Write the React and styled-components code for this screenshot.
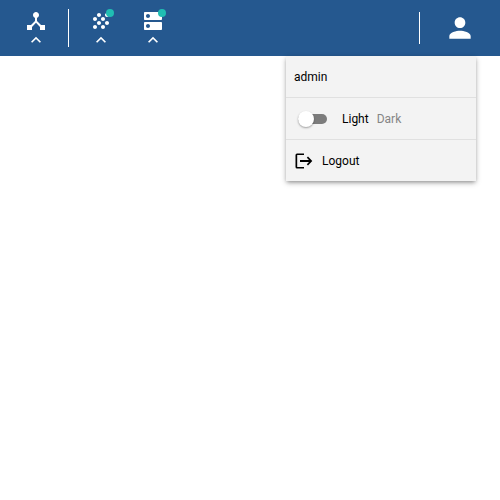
import React, { useState } from "react";
import styled, { createGlobalStyle } from "styled-components";

const GlobalStyle = createGlobalStyle`
  * {
    box-sizing: border-box;
  }
  body {
    margin: 0;
    background: #ffffff;
    color: #000000;
    font: 12px/16px Roboto, "Liberation Sans", sans-serif;
  }
`;

const Shell = styled.div`
  min-height: 100vh;
`;

const Header = styled.header`
  position: relative;
  display: flex;
  align-items: center;
  justify-content: space-between;
  height: 56px;
  padding: 0 24px 0 10px;
  background: #25588f;
`;

const Group = styled.nav`
  display: flex;
  align-items: center;
`;

const Divider = styled.span`
  width: 1px;
  height: ${({ $height }) => $height}px;
  margin: 0 6px;
  background: #ffffff;
`;

const NavButton = styled.button`
  position: relative;
  display: flex;
  flex-direction: column;
  align-items: center;
  width: 52px;
  padding: 3px 0 0;
  border: 0;
  background: none;
  color: #ffffff;
  cursor: pointer;
`;

const AccountButton = styled.button`
  display: flex;
  margin-left: 18px;
  padding: 0;
  border: 0;
  background: none;
  color: #ffffff;
  cursor: pointer;
`;

const Icon = styled.svg`
  display: block;
  width: ${({ $size }) => $size}px;
  height: ${({ $size }) => $size}px;
  fill: currentColor;
`;

const Chevron = styled(Icon)`
  margin-top: -3px;
`;

const Badge = styled.span`
  position: absolute;
  top: 3px;
  right: 13px;
  width: 8px;
  height: 8px;
  border-radius: 50%;
  background: #20beb3;
`;

const Menu = styled.div`
  position: absolute;
  top: 100%;
  right: 24px;
  width: 190px;
  background: #f3f3f3;
  box-shadow: 0 2px 4px -1px rgba(0, 0, 0, 0.35), 0 2px 6px rgba(0, 0, 0, 0.18);
`;

const MenuRow = styled.div`
  display: flex;
  align-items: center;
  min-height: 41px;
  padding: 0 8px;

  &:not(:first-child) {
    min-height: 42px;
    border-top: 1px solid #e0e0e0;
  }
`;

const SwitchLabel = styled.label`
  display: flex;
  align-items: center;
  padding-left: 4px;
  cursor: pointer;
`;

const Switch = styled.input`
  appearance: none;
  display: flex;
  align-items: center;
  width: 29px;
  height: 10px;
  margin: 0 15px 0 0;
  background: #7c7c7c;
  border-radius: 5px;
  cursor: pointer;

  &::before {
    content: "";
    flex: none;
    width: 16px;
    height: 16px;
    border-radius: 50%;
    background: #ffffff;
    box-shadow: 0 1px 2px rgba(0, 0, 0, 0.35);
  }
  &:checked::before {
    margin-left: 13px;
  }
`;

const Mode = styled.span`
  margin-right: 8px;
  color: ${({ $active }) => ($active ? "#000000" : "#858585")};
`;

const LogoutButton = styled.button`
  display: flex;
  align-items: center;
  gap: 8px;
  flex: 1;
  padding: 0;
  border: 0;
  background: none;
  color: inherit;
  font: inherit;
  cursor: pointer;
`;

const paths = {
  hub: "M17 16l-4-4V8.82C14.16 8.4 15 7.3 15 6c0-1.66-1.34-3-3-3S9 4.34 9 6c0 1.3.84 2.4 2 2.82V12l-4 4H3v5h5v-3.05l4-4.2 4 4.2V21h5v-5h-4z",
  grain:
    "M10 12c-1.1 0-2 .9-2 2s.9 2 2 2 2-.9 2-2-.9-2-2-2zM6 8c-1.1 0-2 .9-2 2s.9 2 2 2 2-.9 2-2-.9-2-2-2zm0 8c-1.1 0-2 .9-2 2s.9 2 2 2 2-.9 2-2-.9-2-2-2zm12-8c1.1 0 2-.9 2-2s-.9-2-2-2-2 .9-2 2 .9 2 2 2zm-4 8c-1.1 0-2 .9-2 2s.9 2 2 2 2-.9 2-2-.9-2-2-2zm4-4c-1.1 0-2 .9-2 2s.9 2 2 2 2-.9 2-2-.9-2-2-2zm-4-4c-1.1 0-2 .9-2 2s.9 2 2 2 2-.9 2-2-.9-2-2-2zm-4-4c-1.1 0-2 .9-2 2s.9 2 2 2 2-.9 2-2-.9-2-2-2z",
  servers:
    "M20 13H4c-.55 0-1 .45-1 1v6c0 .55.45 1 1 1h16c.55 0 1-.45 1-1v-6c0-.55-.45-1-1-1zM7 19c-1.1 0-2-.9-2-2s.9-2 2-2 2 .9 2 2-.9 2-2 2zM20 3H4c-.55 0-1 .45-1 1v6c0 .55.45 1 1 1h16c.55 0 1-.45 1-1V4c0-.55-.45-1-1-1zM7 9c-1.1 0-2-.9-2-2s.9-2 2-2 2 .9 2 2-.9 2-2 2z",
  up: "M12 8l-6 6 1.41 1.41L12 10.83l4.59 4.58L18 14z",
  person:
    "M12 12c2.21 0 4-1.79 4-4s-1.79-4-4-4-4 1.79-4 4 1.79 4 4 4zm0 2c-2.67 0-8 1.34-8 4v2h16v-2c0-2.66-5.33-4-8-4z",
};

function NavItem({ label, path, badge }) {
  return (
    <NavButton type="button" aria-label={label}>
      <Icon $size={24} viewBox="0 0 24 24" aria-hidden="true">
        <path d={path} />
      </Icon>
      <Chevron $size={20} viewBox="0 0 24 24" aria-hidden="true">
        <path d={paths.up} />
      </Chevron>
      {badge && <Badge />}
    </NavButton>
  );
}

export default function App() {
  const [dark, setDark] = useState(false);

  return (
    <Shell>
      <GlobalStyle />
      <Header>
        <Group aria-label="Main">
          <NavItem label="Topology" path={paths.hub} />
          <Divider $height={38} />
          <NavItem label="Clusters" path={paths.grain} badge />
          <NavItem label="Servers" path={paths.servers} badge />
        </Group>
        <Group aria-label="Account">
          <Divider $height={32} />
          <AccountButton type="button" aria-label="Account">
            <Icon $size={32} viewBox="0 0 24 24" aria-hidden="true">
              <path d={paths.person} />
            </Icon>
          </AccountButton>
        </Group>
        <Menu>
          <MenuRow>admin</MenuRow>
          <MenuRow>
            <SwitchLabel>
              <Switch
                type="checkbox"
                role="switch"
                checked={dark}
                onChange={(event) => setDark(event.target.checked)}
              />
              <Mode $active={!dark}>Light</Mode>
              <Mode $active={dark}>Dark</Mode>
            </SwitchLabel>
          </MenuRow>
          <MenuRow>
            <LogoutButton type="button">
              <Icon $size={20} viewBox="0 0 20 20" aria-hidden="true">
                <path d="M10 2.500H3Q1.500 2.500 1.500 4V16Q1.500 17.500 3 17.500H10V15.900H3.200V4.100H10Z" />
                <path d="M6 9.100H15L12.800 6.800L14 5.600L18.300 10L14 14.400L12.800 13.200L15 10.900H6Z" />
              </Icon>
              Logout
            </LogoutButton>
          </MenuRow>
        </Menu>
      </Header>
    </Shell>
  );
}
